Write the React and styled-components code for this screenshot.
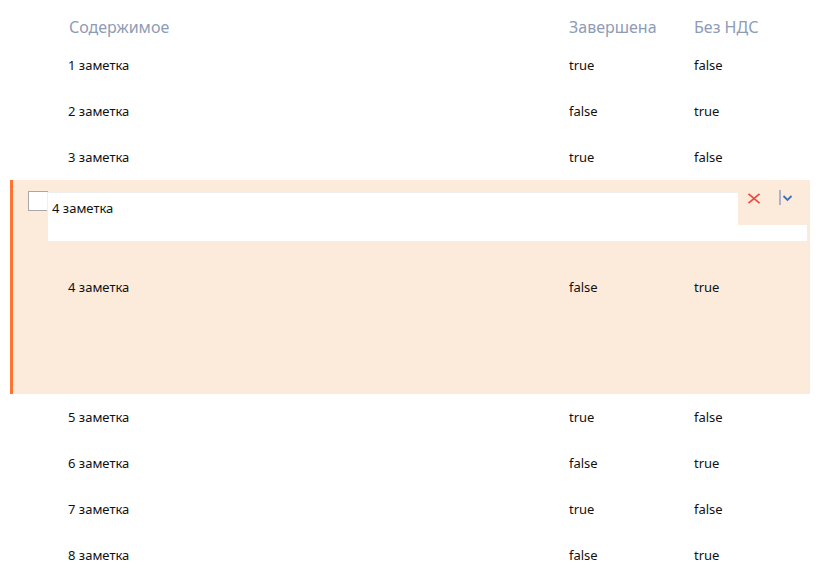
import React from "react";
import styled, { createGlobalStyle } from "styled-components";

const Global = createGlobalStyle`
  html, body { margin: 0; padding: 0; background: #fff; }
  body { font-family: "Noto Sans", "DejaVu Sans", sans-serif; }
`;

const Table = styled.div`
  width: 800px;
  margin: 0 10px;
  display: flex;
  flex-direction: column;
`;

const Row = styled.div`
  position: relative;
  display: grid;
  grid-template-columns: 501px 125px 1fr;
  align-items: center;
  height: ${(p) => p.$h || 46}px;
  padding-left: ${(p) => (p.$active ? 55 : 58)}px;
  border-left: ${(p) => (p.$active ? "3px solid #ff7433" : "none")};
  background: ${(p) => (p.$active ? "#fcebdb" : "transparent")};
`;

const HeadRow = styled(Row)`
  height: 42px;
  align-items: end;
  padding-bottom: 5px;
  box-sizing: border-box;
  padding-left: 59px;
  grid-template-columns: 500px 125px 1fr;
`;

const HeadCell = styled.div`
  font-size: 16px;
  color: #8d9cb6;
  line-height: 20px;
`;

const Cell = styled.div`
  font-size: 13px;
  color: #111;
  line-height: 18px;
`;

const Check = styled.div`
  position: absolute;
  left: 15px;
  top: 11px;
  width: 18px;
  height: 18px;
  border: 1px solid #a8a8a8;
  background: #fff;
`;

const Editor = styled.div`
  position: absolute;
  left: 35px;
  right: 3px;
  top: 13px;
  height: 48px;
  background: #fff;
  box-shadow: 0 0 0 1px #eee;
  box-sizing: border-box;
  padding: 6px 4px;
  font-size: 13px;
  color: #111;
  line-height: 18px;
`;

const Tools = styled.div`
  position: absolute;
  top: -7px;
  right: -1px;
  width: 70px;
  height: 39px;
  background: #fcebdb;
  display: flex;
  align-items: flex-start;
`;

const ToolBtn = styled.div`
  display: flex;
  margin-left: ${(p) => p.$ml}px;
  margin-top: ${(p) => p.$mt}px;
`;

const rows = [
  ["1 заметка", "true", "false"],
  ["2 заметка", "false", "true"],
  ["3 заметка", "true", "false"],
  ["4 заметка", "false", "true"],
  ["5 заметка", "true", "false"],
  ["6 заметка", "false", "true"],
  ["7 заметка", "true", "false"],
  ["8 заметка", "false", "true"],
];

export default function App() {
  return (
    <>
      <Global />
      <Table>
        <HeadRow>
          <HeadCell>Содержимое</HeadCell>
          <HeadCell>Завершена</HeadCell>
          <HeadCell>Без НДС</HeadCell>
        </HeadRow>
        {rows.map((r, i) =>
          i === 3 ? (
            <Row key={i} $active $h={214}>
              <Cell>{r[0]}</Cell>
              <Cell>{r[1]}</Cell>
              <Cell>{r[2]}</Cell>
              <Check />
              <Editor>
                4 заметка
                <Tools>
                  <ToolBtn $ml={9} $mt={7}>
                    <svg width="14" height="11" viewBox="0 0 14 11">
                      <path d="M1.5 0.8 L12.5 10.2 M12.5 0.8 L1.5 10.2" stroke="#f2453a" strokeWidth="1.6" fill="none" />
                    </svg>
                  </ToolBtn>
                  <ToolBtn $ml={18} $mt={4}>
                    <svg width="16" height="15" viewBox="0 0 16 15">
                      <path d="M1 0 V15" stroke="#8a9bc0" strokeWidth="1.4" />
                      <path d="M4.5 6 L8.5 10 L12.5 6" stroke="#3b73b9" strokeWidth="1.8" fill="none" />
                    </svg>
                  </ToolBtn>
                </Tools>
              </Editor>
            </Row>
          ) : (
            <Row key={i}>
              <Cell>{r[0]}</Cell>
              <Cell>{r[1]}</Cell>
              <Cell>{r[2]}</Cell>
            </Row>
          )
        )}
      </Table>
    </>
  );
}
